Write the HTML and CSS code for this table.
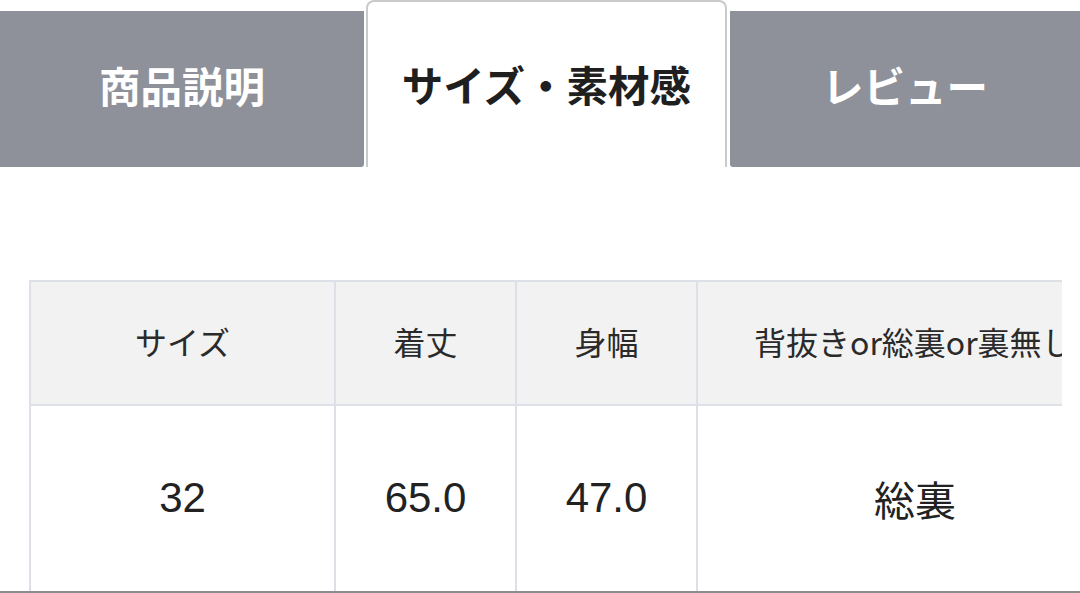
FILE: index.html
```html
<!DOCTYPE html>
<html lang="ja">
<head>
<meta charset="utf-8">
<link rel="stylesheet" href="styles.css">
</head>
<body>
<div class="page">
  <nav class="tabs">
    <div class="tab tab-first">商品説明</div>
    <div class="tab tab-active">サイズ・素材感</div>
    <div class="tab tab-last">レビュー</div>
  </nav>
  <div class="table-wrap">
    <table class="size-table">
      <colgroup>
        <col class="c1"><col class="c2"><col class="c3"><col class="c4">
      </colgroup>
      <thead>
        <tr>
          <th>サイズ</th>
          <th>着丈</th>
          <th>身幅</th>
          <th>背抜きor総裏or裏無し</th>
        </tr>
      </thead>
      <tbody>
        <tr>
          <td class="num">32</td>
          <td class="num">65.0</td>
          <td class="num">47.0</td>
          <td>総裏</td>
        </tr>
      </tbody>
    </table>
  </div>
  <div class="rule"></div>
</div>
</body>
</html>
```

FILE: styles.css
```css
html, body {
  margin: 0;
  padding: 0;
  background: #ffffff;
}
body {
  width: 1080px;
  height: 593px;
  overflow: hidden;
  font-family: "Noto Sans CJK JP", "Noto Sans", sans-serif;
}
.page {
  display: flex;
  flex-direction: column;
  height: 593px;
}
.tabs {
  display: flex;
  align-items: flex-end;
  height: 167px;
  flex: none;
}
.tab {
  display: flex;
  align-items: center;
  justify-content: center;
  font-size: 41.5px;
  font-weight: 700;
  box-sizing: border-box;
}
.tab-first {
  width: 364px;
  height: 156px;
  background: #8e9199;
  color: #ffffff;
  border-bottom-right-radius: 3px;
  padding-bottom: 8px;
}
.tab-active {
  width: 361px;
  height: 167px;
  margin-left: 2px;
  background: #ffffff;
  color: #1f1f1f;
  border: 2px solid #c9cacc;
  border-bottom: none;
  border-radius: 8px 8px 0 0;
  padding-top: 0;
  padding-bottom: 2px;
}
.tab-last {
  flex: 1;
  height: 156px;
  margin-left: 3px;
  background: #8e9199;
  color: #ffffff;
  border-bottom-left-radius: 3px;
  padding-bottom: 8px;
}
.table-wrap {
  margin: 113px 18px 0 29px;
  height: 311px;
  overflow: hidden;
  flex: none;
}
.size-table {
  border-collapse: collapse;
  table-layout: fixed;
  width: 1240px;
}
.c1 { width: 305px; }
.c2 { width: 181px; }
.c3 { width: 181px; }
.c4 { width: 573px; }
.size-table th,
.size-table td {
  border: 2.5px solid #dde0e6;
  text-align: center;
  vertical-align: middle;
  padding: 0;
}
.size-table th {
  height: 118px;
  background: #f2f2f2;
  font-weight: 400;
  font-size: 32px;
  color: #2a2a2a;
  white-space: nowrap;
  text-align: left;
  padding-bottom: 4px;
}
.size-table th:nth-child(-n+3) {
  text-align: center;
}
.size-table th:nth-child(4) {
  padding-left: 56px;
}
.size-table td {
  height: 184px;
  font-size: 41px;
  color: #222222;
  background: #ffffff;
  text-align: left;
  padding-bottom: 4px;
}
.size-table td:nth-child(-n+3) {
  text-align: center;
}
.size-table td:nth-child(4) {
  padding-left: 176px;
}
.size-table td.num {
  font-family: "Liberation Sans", Arial, sans-serif;
  font-size: 42px;
}
.rule {
  height: 2px;
  background: #8c8c8c;
  flex: none;
}
```
